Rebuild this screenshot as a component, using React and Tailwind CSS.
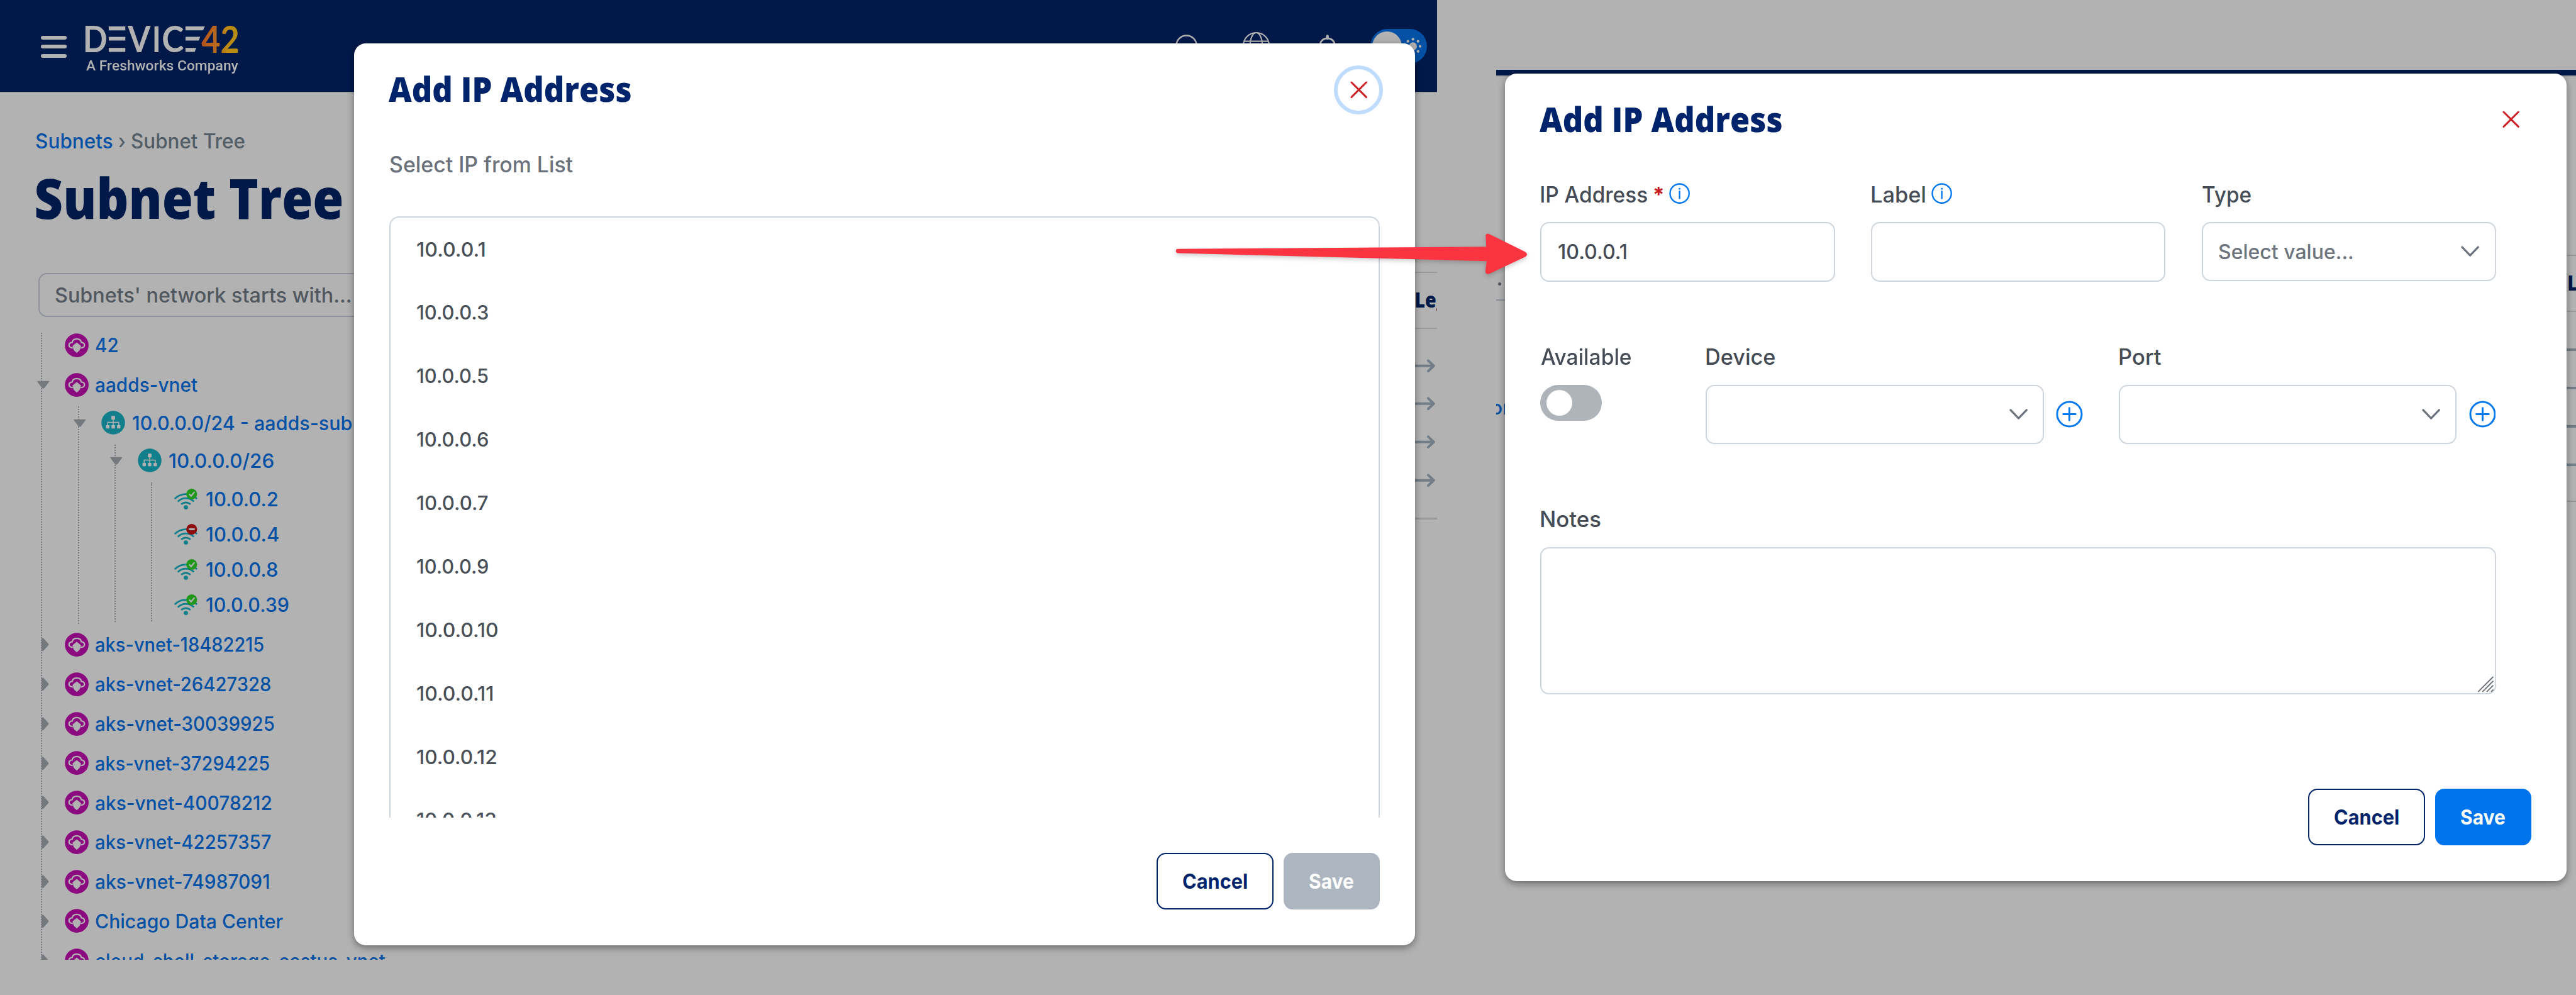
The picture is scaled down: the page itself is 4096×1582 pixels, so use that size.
import React from "react";

/* ---------- text ---------- */

const KINDS = {
  body: { font: '450 32px Inter', cls: 'font-["Inter",sans-serif] text-[32px] font-[450] translate-y-px' },
  crumb: { font: '450 33px Inter', cls: 'font-["Inter",sans-serif] text-[33px] font-[450] translate-y-px' },
  label: { font: '450 36px Inter', cls: 'font-["Inter",sans-serif] text-[36px] font-[450] translate-y-px' },
  button: { font: '650 33px Inter', cls: 'font-["Inter",sans-serif] text-[33px] font-[650] translate-y-px' },
  title: { font: '800 56px "Open Sans"', cls: 'font-["Open_Sans",sans-serif] text-[56px] font-extrabold -translate-y-px' },
  page: { font: '800 90px "Open Sans"', cls: 'font-["Open_Sans",sans-serif] text-[90px] font-extrabold -translate-y-[2px]' },
  column: { font: '800 34px "Open Sans"', cls: 'font-["Open_Sans",sans-serif] text-[34px] font-extrabold -translate-y-[1px]' },
  tagline: { font: '500 22px Roboto', cls: 'font-["Roboto",sans-serif] text-[22px] font-medium' },
};

const ctx = document.createElement("canvas").getContext("2d");

/* A single line of text whose inked width is exactly w. */
function Fit({ kind = "body", w, children, className = "" }) {
  const k = KINDS[kind];
  ctx.font = k.font;
  const m = ctx.measureText(children);
  const left = -m.actualBoundingBoxLeft;
  const s = w / (m.actualBoundingBoxRight - left);
  return (
    <span className={`inline-block shrink-0 whitespace-nowrap leading-none ${k.cls} ${className}`} style={{ width: w }}>
      <span
        className="inline-block origin-left"
        style={{ transform: `translateX(${-left * s}px) scaleX(${s})` }}
      >
        {children}
      </span>
    </span>
  );
}

/* ---------- icons ---------- */

function Logo() {
  return (
    <svg width="272" height="86" viewBox="-10 -20 272 86" className="-mx-[10px] -my-[20px] block overflow-visible">
      <defs>
        <linearGradient id="fortyTwo" x1="0" x2="1">
          <stop offset="0" stopColor="#b5541e" />
          <stop offset="0.4" stopColor="#b9681c" />
          <stop offset="0.7" stopColor="#bd8b14" />
          <stop offset="1" stopColor="#b48c12" />
        </linearGradient>
      </defs>
      <g fill="#b2b2b2" fontFamily="Lato, sans-serif" fontWeight="700" fontSize="59">
        <text x="-4" y="43.5" textLength="40" lengthAdjust="spacingAndGlyphs">D</text>
        <text x="69" y="43.5" textLength="37" lengthAdjust="spacingAndGlyphs">V</text>
        <rect x="112.500" y="1.500" width="6.500" height="42" />
        <text x="124.500" y="43.5" textLength="36" lengthAdjust="spacingAndGlyphs">C</text>
        <rect x="38" y="1.500" width="27" height="6.500" />
        <rect x="38" y="18.500" width="27" height="6" />
        <rect x="38" y="36.500" width="27" height="6.500" />
        <path d="M163 1.500H194.500L191.500 8H163ZM163 18.500H187L184.500 24.500H163ZM163 36.500H180.500L178 43H163Z" />
      </g>
      <text x="189" y="44" textLength="62" lengthAdjust="spacingAndGlyphs" fill="url(#fortyTwo)" fontFamily="Lato, sans-serif" fontWeight="700" fontSize="60">
        42
      </text>
    </svg>
  );
}

function CloudIcon() {
  return (
    <svg width="39" height="39" viewBox="0 0 39 39" className="block shrink-0">
      <circle cx="19.500" cy="19.500" r="19.300" fill="#8b0a7f" />
      <path d="M13 23.700C5 24.200 5 14.800 12 14.800C13.500 7.300 25.500 7.300 27 14.800C34 14.800 34 24.200 26 23.700" fill="none" stroke="#b2b2b2" strokeWidth="2.300" />
      <path d="M19.500 15.200L26 20.500L25 24.500L24 27.500L19.500 31.500L15 27.500L14 24.500L13 20.500Z" fill="#b2b2b2" stroke="#b2b2b2" strokeWidth="0.800" strokeLinejoin="round" />
    </svg>
  );
}

function SitemapIcon() {
  return (
    <svg width="39" height="39" viewBox="-19.5 -19.5 39 39" className="block shrink-0">
      <circle r="19.200" fill="#107f8b" />
      <g fill="#b2b2b2">
        <rect x="-3" y="-11" width="6" height="6" rx="1" />
        <rect x="-11.700" y="4" width="5.500" height="5.500" rx="0.800" />
        <rect x="-2.750" y="4" width="5.500" height="5.500" rx="0.800" />
        <rect x="6.200" y="4" width="5.500" height="5.500" rx="0.800" />
      </g>
      <path d="M0-6V5M-9 5V-0.500H9V5" fill="none" stroke="#b2b2b2" strokeWidth="1.500" />
    </svg>
  );
}

function WifiIcon({ ok }) {
  return (
    <svg width="40" height="36" viewBox="0 0 40 36" className="block shrink-0">
      <circle cx="19" cy="31.300" r="3.500" fill="#107f8b" />
      <path d="M1 17.500A25 25 0 0 1 37 17.500M6 22A18 18 0 0 1 32 22M11.500 26.500A10.500 10.500 0 0 1 26.500 26.500" fill="none" stroke="#107f8b" strokeWidth="2.900" />
      <circle cx="28.500" cy="9.700" r="8.800" fill={ok ? "#1f981c" : "#8f0c0f"} />
      {ok ? (
        <path d="M24.500 9.800L27.500 13L33 6.300" fill="none" stroke="#b2b2b2" strokeWidth="2.300" />
      ) : (
        <rect x="23.700" y="8.200" width="9.800" height="3" fill="#b2b2b2" />
      )}
    </svg>
  );
}

function Caret({ open }) {
  return open ? (
    <svg width="22" height="14" viewBox="0 0 22 14" className="block">
      <path d="M2 1.500H20L12.500 11.500Q11 13 9.500 11.500Z" fill="#74797e" stroke="#74797e" strokeWidth="1.500" strokeLinejoin="round" />
    </svg>
  ) : (
    <svg width="14" height="22" viewBox="0 0 14 22" className="block">
      <path d="M1.500 1L4 1L12 10Q12.800 11 12 12L4 21H1.500Z" fill="#74797e" stroke="#74797e" strokeWidth="0.800" />
    </svg>
  );
}

function CloseX() {
  return (
    <svg width="28" height="28" viewBox="0 0 28 28" className="block">
      <path d="M2 2L26 26M26 2L2 26" stroke="#cc2024" strokeWidth="3" strokeLinecap="round" />
    </svg>
  );
}

function InfoIcon() {
  return (
    <svg width="34" height="34" viewBox="0 0 34 34" className="block shrink-0">
      <circle cx="17" cy="17" r="15.500" fill="none" stroke="#0078f0" strokeWidth="2.400" />
      <circle cx="17" cy="9.500" r="1.500" fill="#0078f0" />
      <path d="M17 13.500V25" stroke="#0078f0" strokeWidth="2.400" strokeLinecap="round" />
    </svg>
  );
}

function PlusIcon() {
  return (
    <svg width="44" height="44" viewBox="0 0 44 44" className="block shrink-0">
      <circle cx="22" cy="22" r="20" fill="none" stroke="#0078f0" strokeWidth="3" />
      <path d="M22 12V32M12 22H32" stroke="#0078f0" strokeWidth="3" strokeLinecap="round" />
    </svg>
  );
}

function Chevron() {
  return (
    <svg width="30" height="18" viewBox="0 0 30 18" className="block">
      <path d="M2 2L15 15.500L28 2" fill="none" stroke="#6a727b" strokeWidth="3.200" strokeLinecap="round" strokeLinejoin="round" />
    </svg>
  );
}

function RowArrow() {
  return (
    <svg width="34" height="22" viewBox="0 0 34 22" className="block">
      <path d="M1 11H31M22.500 2.500L31.500 11L22.500 19.500" fill="none" stroke="#727d87" strokeWidth="4" strokeLinecap="round" strokeLinejoin="round" />
    </svg>
  );
}

/* ---------- page behind the dialogs ---------- */

function TopBar() {
  return (
    <header className="flex h-[150px] shrink-0 justify-between bg-[#001949] shadow-[0_2px_0_#a0a1a6]">
      <div className="flex pl-[67px] pt-[42px]">
        <div className="mt-4 flex w-[42px] flex-col gap-[9px]">
          <div className="h-1.5 rounded-full bg-[#b2b2b2]" />
          <div className="h-1.5 rounded-full bg-[#b2b2b2]" />
          <div className="h-1.5 rounded-full bg-[#b2b2b2]" />
        </div>
        <div className="ml-[30px] flex flex-col">
          <Logo />
          <div className="mt-2 flex h-[22px] items-center pl-px text-[#b2b2b2]">
            <Fit kind="tagline" w={248}>A Freshworks Company</Fit>
          </div>
        </div>
      </div>
      <div className="flex items-start pr-[17px] pt-[47px]">
        <svg width="40" height="50" viewBox="0 0 40 50" className="mr-[70px] mt-[7px]">
          <circle cx="20" cy="20" r="16.500" fill="none" stroke="#b2b2b2" strokeWidth="2.500" />
        </svg>
        <svg width="46" height="46" viewBox="0 0 46 46" className="mr-[78px] mt-[4px]">
          <g fill="none" stroke="#b2b2b2" strokeWidth="2.200">
            <circle cx="23" cy="23" r="21" />
            <ellipse cx="23" cy="23" rx="10" ry="21" />
            <path d="M4 16H42M4 30H42" />
          </g>
        </svg>
        <svg width="30" height="46" viewBox="0 0 30 46" className="mr-[55px] mt-[9px]">
          <path d="M15 6V2.500" stroke="#b2b2b2" strokeWidth="4.500" strokeLinecap="round" />
          <path d="M3 30V18C3 2 27 2 27 18V30Z" fill="none" stroke="#b2b2b2" strokeWidth="3" />
        </svg>
        <div className="flex h-14 w-[92px] items-center rounded-full bg-[#0451a6] pl-[3px]">
          <div className="size-[48px] rounded-full bg-[#b2b2b2]" />
          <svg width="28" height="28" viewBox="-14 -14 28 28" className="ml-[4px]">
            <circle r="6.500" fill="#b2b2b2" />
            <g fill="#b2b2b2">
              <circle cx="0" cy="-11.500" r="2.200" /><circle cx="8.200" cy="-8.200" r="2.200" />
              <circle cx="11.500" cy="0" r="2.200" /><circle cx="8.200" cy="8.200" r="2.200" />
              <circle cx="0" cy="11.500" r="2.200" /><circle cx="-8.200" cy="8.200" r="2.200" />
              <circle cx="-11.500" cy="0" r="2.200" /><circle cx="-8.200" cy="-8.200" r="2.200" />
            </g>
          </svg>
        </div>
      </div>
    </header>
  );
}

const DOTS = "absolute w-0 border-l-[2.1px] border-dotted border-[#767a80]";

const VNETS = [
  ["aks-vnet-18482215", 274],
  ["aks-vnet-26427328", 285],
  ["aks-vnet-30039925", 291],
  ["aks-vnet-37294225", 283],
  ["aks-vnet-40078212", 286],
  ["aks-vnet-42257357", 285],
  ["aks-vnet-74987091", 282],
  ["Chicago Data Center", 305],
  ["cloud-shell-storage-eastus-vnet", 472],
];

const LEAVES = [
  ["10.0.0.2", 116, true],
  ["10.0.0.4", 118, false],
  ["10.0.0.8", 116, true],
  ["10.0.0.39", 134, true],
];

function VnetRow({ name, w, open, leaf }) {
  return (
    <div className="flex h-[64.3px] shrink-0 items-center">
      <div className="flex w-[46px] items-center">
        {!leaf && (open ? <Caret open /> : <div className="pl-[8px]"><Caret /></div>)}
      </div>
      <CloudIcon />
      <Fit w={w} className="ml-[12px]">{name}</Fit>
    </div>
  );
}

function Tree() {
  return (
    <div className="relative ml-[59px] mt-[14px] flex h-[1032.5px] w-[640px] flex-col overflow-hidden text-[#0451a6]">
      <div className={`${DOTS} left-[8px] top-[12px] h-[1022px]`} />
      <div className={`${DOTS} left-[68px] top-[132px] h-[354px]`} />
      <div className={`${DOTS} left-[127px] top-[194px] h-[289px]`} />
      <div className={`${DOTS} left-[187px] top-[255px] h-[227px]`} />
      <VnetRow name="42" w={36} leaf />
      <VnetRow name="aadds-vnet" w={166} open />
      <div className="flex h-[60px] shrink-0 items-center pl-[60px]">
        <Caret open />
        <div className="ml-[23.500px]"><SitemapIcon /></div>
        <Fit w={357} className="ml-[12.500px]">10.0.0.0/24 - aadds-sub</Fit>
        <span className='ml-[3px] font-["Inter"] text-[32px] font-[450] leading-none translate-y-px'>net</span>
      </div>
      <div className="flex h-[62.800px] shrink-0 items-center pl-[119.500px]">
        <Caret open />
        <div className="ml-[23.500px]"><SitemapIcon /></div>
        <Fit w={170} className="ml-[12px]">10.0.0.0/26</Fit>
      </div>
      <div className="mb-[3.900px] mt-[2.100px] flex flex-col">
        {LEAVES.map(([ip, w, ok]) => (
          <div key={ip} className="flex h-[57.500px] items-center pl-[225px]">
            <WifiIcon ok={ok} />
            <Fit w={w} className="ml-[12px]">{ip}</Fit>
          </div>
        ))}
      </div>
      {VNETS.map(([name, w]) => (
        <VnetRow key={name} name={name} w={w} />
      ))}
    </div>
  );
}

function Page() {
  return (
    <div className="flex h-full flex-col">
      <TopBar />
      <div className="flex justify-between">
        <div className="flex flex-col">
          <div className="mt-[60px] flex h-10 items-center pl-[58px] text-[#535d66]">
            <Fit kind="crumb" w={125} className="text-[#0451a6]">Subnets</Fit>
            <Fit kind="crumb" w={10} className="ml-[11px]">›</Fit>
            <Fit kind="crumb" w={184} className="ml-[10px]">Subnet Tree</Fit>
          </div>
          <div className="mt-[25px] flex h-[100px] items-center pl-[58px] text-[#001949]">
            <Fit kind="page" w={498}>Subnet Tree</Fit>
          </div>
          <div className="ml-[62px] mt-[69px] flex h-[72px] w-[600px] items-center rounded-[14px] border-[2.1px] border-[#8e929b] pl-[26px] text-[#50575e]">
            <Fit kind="crumb" w={481}>Subnets' network starts with...</Fit>
          </div>
          <Tree />
        </div>
        <div className="mt-[292px] flex w-[38px] flex-col overflow-hidden">
          <div className="h-[2.1px] bg-[#96989a]" />
          <div className="flex h-[89px] items-center pl-[3px] text-[#001949]">
            <Fit kind="column" w={51}>Leg</Fit>
          </div>
          <div className="h-[2.1px] bg-[#989b9e]" />
          <div className="flex h-[308px] flex-col items-start gap-[40.400px] pl-px pt-[49px]">
            <RowArrow /><RowArrow /><RowArrow /><RowArrow />
          </div>
          <div className="h-[2.1px] bg-[#96989a]" />
        </div>
      </div>
    </div>
  );
}

/* ---------- dialogs ---------- */

const DIALOG = "absolute flex flex-col rounded-[19px] bg-white shadow-[0_4px_12px_rgba(0,0,0,0.4)]";
const FIELD = "rounded-[14px] border-[2.1px] border-[#cfd5dd]";

function Buttons({ disabled }) {
  return (
    <div className="flex justify-end gap-[17px]">
      <div className="flex h-[92px] w-[190px] items-center justify-center rounded-[15px] border-[2.1px] border-[#00246b] text-[#00246b]">
        <Fit kind="button" w={104}>Cancel</Fit>
      </div>
      <div className={`flex h-[92px] w-[156px] items-center justify-center rounded-[15px] text-white ${disabled ? "bg-[#adb6c0]" : "bg-[#0074ec]"}`}>
        <Fit kind="button" w={72}>Save</Fit>
      </div>
    </div>
  );
}

const FREE_IPS = [
  ["10.0.0.1", 110], ["10.0.0.3", 116], ["10.0.0.5", 116], ["10.0.0.6", 116], ["10.0.0.7", 115],
  ["10.0.0.9", 116], ["10.0.0.10", 131], ["10.0.0.11", 123], ["10.0.0.12", 129], ["10.0.0.13", 129],
];

function PickDialog() {
  return (
    <div className={`${DIALOG} left-[576px] top-[71px] h-[1468px] w-[1728px] px-[58px]`}>
      <div className="flex h-[150px] items-center justify-between">
        <Fit kind="title" w={394} className="-ml-px text-[#00246b]">Add IP Address</Fit>
        <div className="mr-[-6px] flex size-[80px] items-center justify-center rounded-full border-[7px] border-[#bfdbfe]">
          <CloseX />
        </div>
      </div>
      <div className="flex h-[92px] items-center text-[#6b727b]">
        <Fit kind="label" w={298} className="ml-px">Select IP from List</Fit>
      </div>
      <div className="mt-[39px] flex h-[979px] flex-col overflow-hidden rounded-t-[16px] border-x-[2.1px] border-t-[2.1px] border-[#cfd5dd] pl-[43px] text-[#495058]">
        {FREE_IPS.map(([ip, w]) => (
          <div key={ip} className="flex h-[103.300px] shrink-0 items-center">
            <Fit w={w}>{ip}</Fit>
          </div>
        ))}
      </div>
      <div className="mt-[58px]"><Buttons disabled /></div>
    </div>
  );
}

function LabelRow({ text, w, children }) {
  return (
    <div className="flex h-[92px] items-center pl-px text-[#454c55]">
      <Fit kind="label" w={w}>{text}</Fit>
      {children}
    </div>
  );
}

function FormDialog() {
  return (
    <div className={`${DIALOG} left-[14px] top-[5.500px] h-[1315.500px] w-[1729px] px-[58px]`}>
      <div className="flex h-[150px] items-center justify-between">
        <Fit kind="title" w={394} className="-ml-px text-[#00246b]">Add IP Address</Fit>
        <div className="mr-[19px]"><CloseX /></div>
      </div>
      <div className="flex w-[1556px] flex-col">
        <div className="grid grid-cols-3 gap-x-[58.500px]">
          <div>
            <LabelRow text="IP Address" w={173}>
              <span className='ml-[9px] mt-1 font-["Inter"] text-[34px] font-bold leading-none text-[#c8191e]'>*</span>
              <div className="ml-[8px]"><InfoIcon /></div>
            </LabelRow>
            <div className={`${FIELD} flex h-[97px] items-center pl-[27px] text-[#454c55]`}>
              <Fit kind="crumb" w={111}>10.0.0.1</Fit>
            </div>
          </div>
          <div>
            <LabelRow text="Label" w={87}>
              <div className="ml-[10px]"><InfoIcon /></div>
            </LabelRow>
            <div className={`${FIELD} h-[97px]`} />
          </div>
          <div>
            <LabelRow text="Type" w={79} />
            <div className={`${FIELD} flex h-[96px] items-center justify-between pl-[26px] pr-[25px] text-[#6c747d]`}>
              <Fit kind="crumb" w={218}>Select value...</Fit>
              <Chevron />
            </div>
          </div>
        </div>
        <div className="mt-[76px] flex">
          <div className="w-[268.500px]">
            <LabelRow text="Available" w={147} />
            <div className="flex h-[59px] w-[100px] items-center rounded-full bg-[#afb4bb] pl-[10px]">
              <div className="size-[42px] rounded-full bg-white" />
            </div>
          </div>
          <div className="w-[551.500px]">
            <LabelRow text="Device" w={112} />
            <div className={`${FIELD} flex h-[96px] items-center justify-end pr-[25px]`}><Chevron /></div>
          </div>
          <div className="ml-[19.500px] mt-[118px]"><PlusIcon /></div>
          <div className="ml-[58px] w-[550.500px]">
            <LabelRow text="Port" w={68} />
            <div className={`${FIELD} flex h-[96px] items-center justify-end pr-[25px]`}><Chevron /></div>
          </div>
          <div className="ml-[19.500px] mt-[118px]"><PlusIcon /></div>
        </div>
        <div className="mt-[76px]">
          <LabelRow text="Notes" w={97} />
          <div className={`${FIELD} flex h-[240px] items-end justify-end p-px`}>
            <svg width="28" height="28" viewBox="0 0 28 28" className="block">
              <path d="M2 26L25.500 2.500M9 26L25.500 9.500M16 26L25.500 16.500M23 26L25.500 23.500" stroke="#6e7277" strokeWidth="2" strokeLinecap="round" />
            </svg>
          </div>
        </div>
      </div>
      <div className="mt-[154px]"><Buttons /></div>
    </div>
  );
}

/* Narrow strips of the page that show on both sides of the form dialog. */
function FormBackdrop() {
  return (
    <div className="flex h-full flex-col">
      <div className="h-[9px] bg-[#001949] shadow-[0_2px_0_#a0a1a6]" />
      <div className="flex justify-between">
        <div className="flex w-[20px] flex-col overflow-hidden">
          <div className="ml-[3px] mt-[337px] size-[5px] rounded-full bg-[#50575e]" />
          <div className="mt-[22px] h-[2.1px] bg-[#888e97]" />
          <div className='-ml-[9px] mt-[158px] flex h-[34px] items-center font-["Inter"] text-[32px] font-[450] leading-none text-[#0451a6]'>on</div>
        </div>
        <div className="mt-[292px] flex w-[15px] flex-col overflow-hidden">
          <div className="h-[2.1px] bg-[#96989a]" />
          <div className="flex h-[89px] items-center pl-[3px] text-[#001949]">
            <Fit kind="column" w={51}>Leg</Fit>
          </div>
          <div className="h-[2.1px] bg-[#989b9e]" />
          <div className="flex h-[307px] flex-col gap-[58.400px] pt-[59px]">
            <div className="h-1 bg-[#727d87]" />
            <div className="h-1 bg-[#727d87]" />
            <div className="h-1 bg-[#727d87]" />
            <div className="h-1 bg-[#727d87]" />
          </div>
          <div className="h-[2.1px] bg-[#96989a]" />
        </div>
      </div>
    </div>
  );
}

export default function App() {
  return (
    <div className="h-[1582px] w-[4096px] overflow-hidden bg-[#b2b2b2]">
      <div className="relative flex h-[1620px] w-[4194px] gap-[96px] [zoom:0.976633]">
        <section className="relative h-full w-[2340px]">
          <Page />
          <PickDialog />
        </section>
        <section className="relative mt-[114px] w-[1758px]">
          <FormBackdrop />
          <FormDialog />
        </section>
        <svg width="600" height="90" viewBox="0 0 600 90" className="absolute left-[1900px] top-[370px] drop-shadow-[0_4px_4px_rgba(0,0,0,0.2)]">
          <path
            d="M17.500 35.500L519.500 32L518.500 14Q519 9 524.500 11.500L583 40.500Q588.500 44.500 583 48.500L524.500 76Q518 78 518 71.500L520 55.500L17.500 42.500A3.500 3.500 0 0 1 17.500 35.500Z"
            fill="#fa3440"
          />
        </svg>
      </div>
    </div>
  );
}
